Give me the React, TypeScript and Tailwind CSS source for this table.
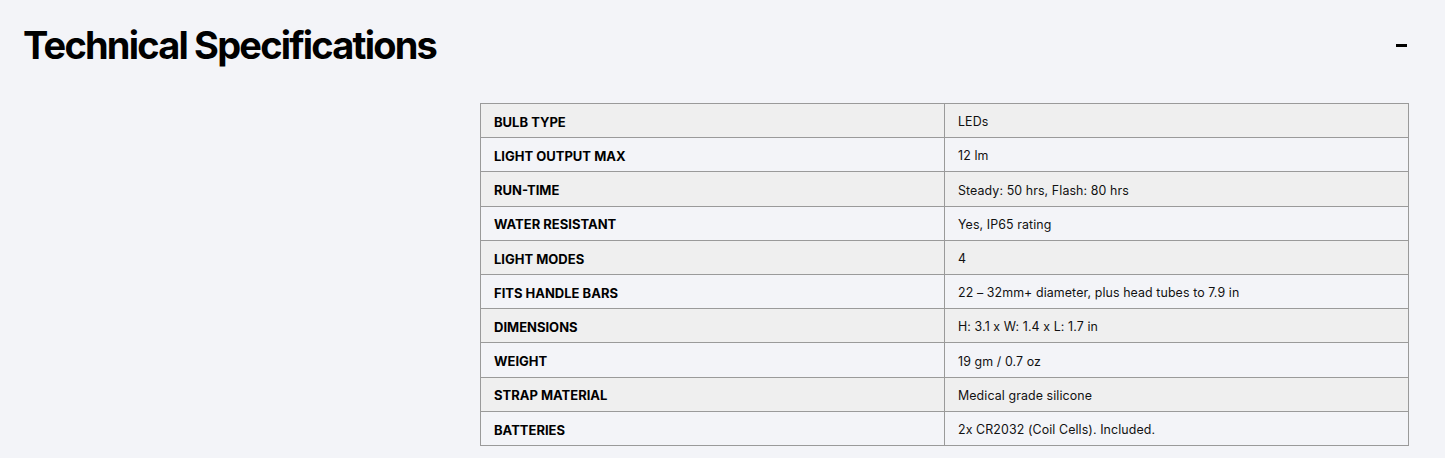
import React from 'react';

const specs: [string, string][] = [
  ['BULB TYPE', 'LEDs'],
  ['LIGHT OUTPUT MAX', '12 lm'],
  ['RUN-TIME', 'Steady: 50 hrs, Flash: 80 hrs'],
  ['WATER RESISTANT', 'Yes, IP65 rating'],
  ['LIGHT MODES', '4'],
  ['FITS HANDLE BARS', '22 – 32mm+ diameter, plus head tubes to 7.9 in'],
  ['DIMENSIONS', 'H: 3.1 x W: 1.4 x L: 1.7 in'],
  ['WEIGHT', '19 gm / 0.7 oz'],
  ['STRAP MATERIAL', 'Medical grade silicone'],
  ['BATTERIES', '2x CR2032 (Coil Cells). Included.'],
];

export default function App() {
  return (
    <div className="min-h-[458px] bg-[#f3f4f8] text-black font-['Inter',sans-serif]">
      <div className="flex items-center justify-between pl-[23px] pr-[38px] pt-[20px] h-[90px]">
        <h1 className="text-[38px] font-bold tracking-[-1.8px] leading-none -mt-[20px]">Technical Specifications</h1>
        <span className="block w-[11px] h-[3px] bg-black -mt-[19px]" />
      </div>
      <div className="flex justify-end pr-[36px] pt-[13px]">
        <table className="w-[929px] border-collapse border border-[#999]">
          <tbody>
            {specs.map(([label, value], i) => (
              <tr key={label} className={i % 2 === 0 ? 'bg-[#efefef]' : 'bg-[#f3f4f8]'}>
                <td className="w-[464px] h-[34.2px] border border-[#9a9a9a] pl-[13px] pt-[4px] text-[13px] font-bold">{label}</td>
                <td className="h-[34.2px] border border-[#9a9a9a] pl-[13px] pt-[4px] text-[12.4px] tracking-[0.1px] text-[#111]">{value}</td>
              </tr>
            ))}
          </tbody>
        </table>
      </div>
    </div>
  );
}
